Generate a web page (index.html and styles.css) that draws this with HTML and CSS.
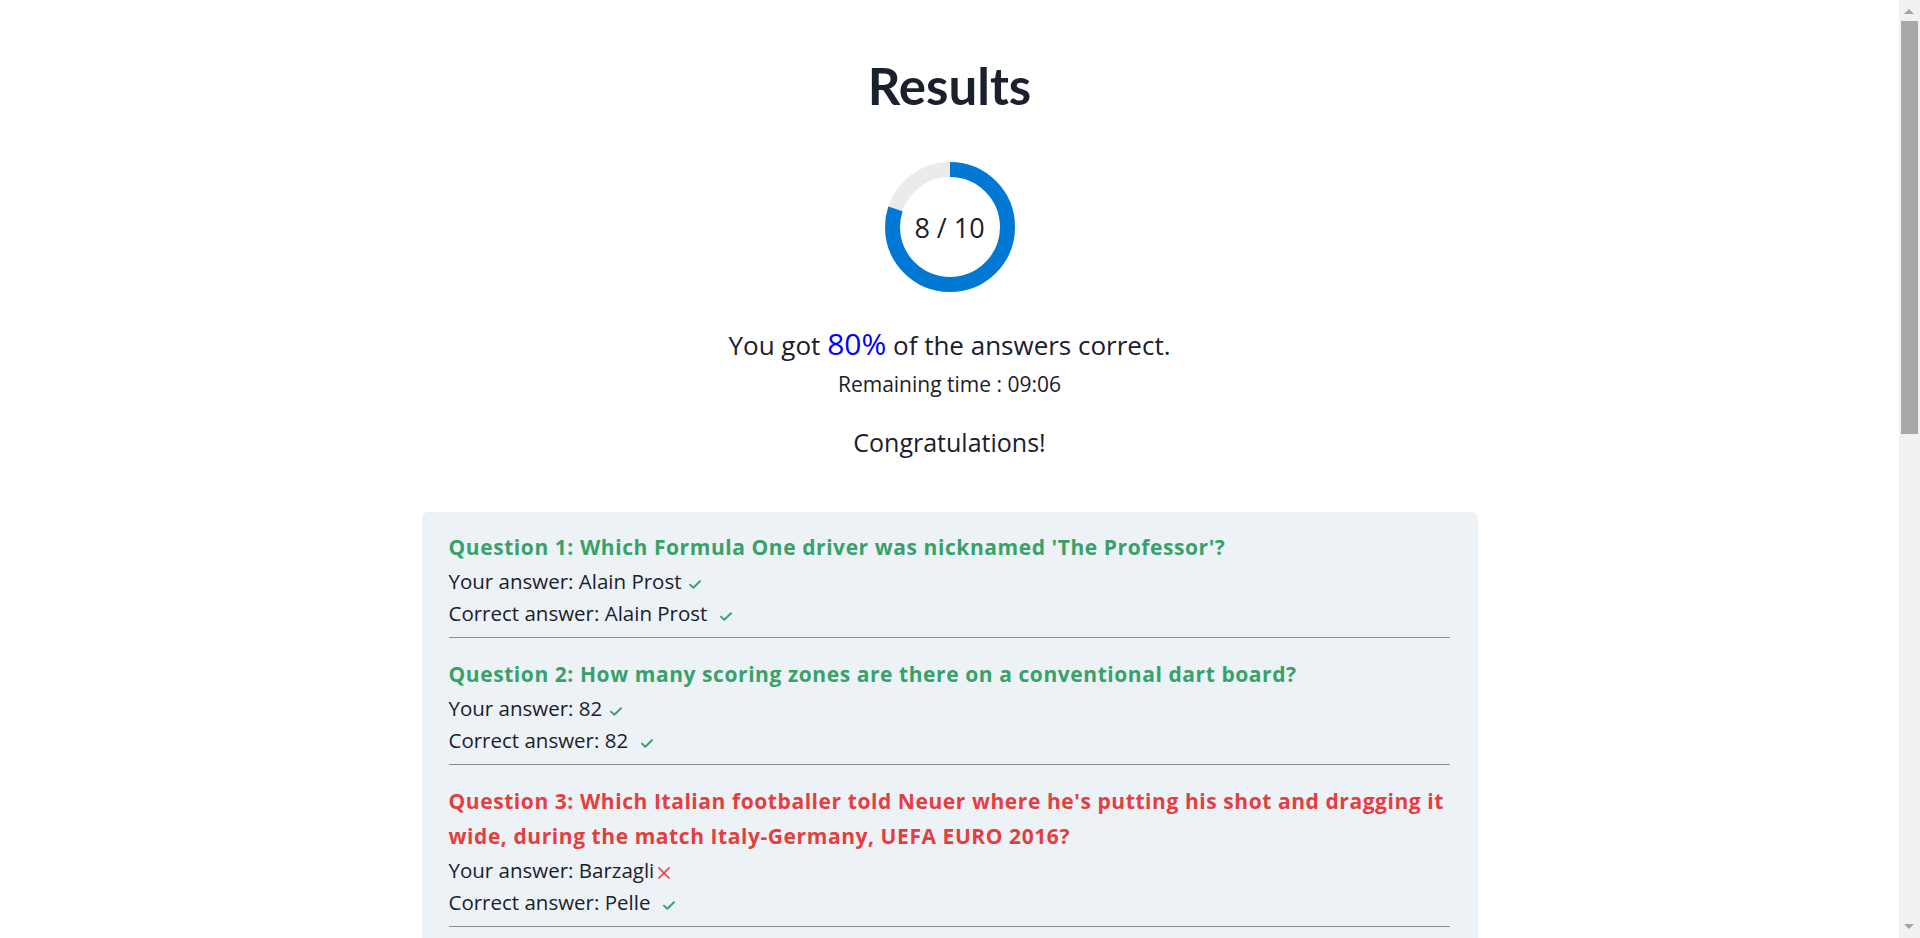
FILE: index.html
```html
<!DOCTYPE html>
<html lang="en">
<head>
<meta charset="utf-8">
<title>Results</title>
<link rel="stylesheet" href="styles.css">
</head>
<body>
<main class="page">
  <h1 class="title">Results</h1>
  <div class="progress">
    <svg class="progress-svg" width="130" height="130" viewBox="0 0 130 130">
      <circle class="track" cx="65" cy="65" r="57.5"></circle>
      <circle class="bar" cx="65" cy="65" r="57.5" transform="rotate(-90 65 65)"></circle>
    </svg>
    <div class="progress-label">8 / 10</div>
  </div>
  <p class="score">You got <span class="pct">80%</span> of the answers correct.</p>
  <p class="time">Remaining time : 09:06</p>
  <p class="congrats">Congratulations!</p>

  <section class="card">
    <div class="item">
      <div class="q ok">Question 1: Which Formula One driver was nicknamed 'The Professor'?</div>
      <div class="ans">Your answer: Alain Prost <svg class="ico" width="12" height="9" viewBox="0 0 12 9"><path class="tick" d="M1 4.6 L4.3 7.8 L11 1.2"/></svg></div>
      <div class="ans">Correct answer: Alain Prost &nbsp;<svg class="ico" width="12" height="9" viewBox="0 0 12 9"><path class="tick" d="M1 4.6 L4.3 7.8 L11 1.2"/></svg></div>
    </div>
    <div class="item">
      <div class="q ok">Question 2: How many scoring zones are there on a conventional dart board?</div>
      <div class="ans">Your answer: 82 <svg class="ico" width="12" height="9" viewBox="0 0 12 9"><path class="tick" d="M1 4.6 L4.3 7.8 L11 1.2"/></svg></div>
      <div class="ans">Correct answer: 82 &nbsp;<svg class="ico" width="12" height="9" viewBox="0 0 12 9"><path class="tick" d="M1 4.6 L4.3 7.8 L11 1.2"/></svg></div>
    </div>
    <div class="item">
      <div class="q bad">Question 3: Which Italian footballer told Neuer where he's putting his shot and dragging it wide, during the match Italy-Germany, UEFA EURO 2016?</div>
      <div class="ans">Your answer: Barzagli<svg class="ico ico-x" width="14" height="14" viewBox="0 0 14 14"><path class="cross" d="M2 2 L12 12 M12 2 L2 12"/></svg></div>
      <div class="ans">Correct answer: Pelle &nbsp;<svg class="ico" width="12" height="9" viewBox="0 0 12 9"><path class="tick" d="M1 4.6 L4.3 7.8 L11 1.2"/></svg></div>
    </div>
    <div class="item">
      <div class="q ok">Question 4: In which country were the first Olympic Games of the modern era held?</div>
      <div class="ans">Your answer: Greece <svg class="ico" width="12" height="9" viewBox="0 0 12 9"><path class="tick" d="M1 4.6 L4.3 7.8 L11 1.2"/></svg></div>
      <div class="ans">Correct answer: Greece &nbsp;<svg class="ico" width="12" height="9" viewBox="0 0 12 9"><path class="tick" d="M1 4.6 L4.3 7.8 L11 1.2"/></svg></div>
    </div>
    <div class="item">
      <div class="q ok">Question 5: How many players are there in a rugby union team?</div>
      <div class="ans">Your answer: 15 <svg class="ico" width="12" height="9" viewBox="0 0 12 9"><path class="tick" d="M1 4.6 L4.3 7.8 L11 1.2"/></svg></div>
      <div class="ans">Correct answer: 15 &nbsp;<svg class="ico" width="12" height="9" viewBox="0 0 12 9"><path class="tick" d="M1 4.6 L4.3 7.8 L11 1.2"/></svg></div>
    </div>
    <div class="item">
      <div class="q bad">Question 6: Which country won the first FIFA World Cup in 1930?</div>
      <div class="ans">Your answer: Argentina<svg class="ico ico-x" width="14" height="14" viewBox="0 0 14 14"><path class="cross" d="M2 2 L12 12 M12 2 L2 12"/></svg></div>
      <div class="ans">Correct answer: Uruguay &nbsp;<svg class="ico" width="12" height="9" viewBox="0 0 12 9"><path class="tick" d="M1 4.6 L4.3 7.8 L11 1.2"/></svg></div>
    </div>
    <div class="item">
      <div class="q ok">Question 7: In tennis, what is a score of zero called?</div>
      <div class="ans">Your answer: Love <svg class="ico" width="12" height="9" viewBox="0 0 12 9"><path class="tick" d="M1 4.6 L4.3 7.8 L11 1.2"/></svg></div>
      <div class="ans">Correct answer: Love &nbsp;<svg class="ico" width="12" height="9" viewBox="0 0 12 9"><path class="tick" d="M1 4.6 L4.3 7.8 L11 1.2"/></svg></div>
    </div>
    <div class="item">
      <div class="q ok">Question 8: How long is a marathon, in kilometres (rounded)?</div>
      <div class="ans">Your answer: 42 <svg class="ico" width="12" height="9" viewBox="0 0 12 9"><path class="tick" d="M1 4.6 L4.3 7.8 L11 1.2"/></svg></div>
      <div class="ans">Correct answer: 42 &nbsp;<svg class="ico" width="12" height="9" viewBox="0 0 12 9"><path class="tick" d="M1 4.6 L4.3 7.8 L11 1.2"/></svg></div>
    </div>
    <div class="item">
      <div class="q ok">Question 9: Which sport uses the terms 'birdie', 'eagle' and 'bogey'?</div>
      <div class="ans">Your answer: Golf <svg class="ico" width="12" height="9" viewBox="0 0 12 9"><path class="tick" d="M1 4.6 L4.3 7.8 L11 1.2"/></svg></div>
      <div class="ans">Correct answer: Golf &nbsp;<svg class="ico" width="12" height="9" viewBox="0 0 12 9"><path class="tick" d="M1 4.6 L4.3 7.8 L11 1.2"/></svg></div>
    </div>
    <div class="item">
      <div class="q ok">Question 10: How many rings are there on the Olympic flag?</div>
      <div class="ans">Your answer: 5 <svg class="ico" width="12" height="9" viewBox="0 0 12 9"><path class="tick" d="M1 4.6 L4.3 7.8 L11 1.2"/></svg></div>
      <div class="ans">Correct answer: 5 &nbsp;<svg class="ico" width="12" height="9" viewBox="0 0 12 9"><path class="tick" d="M1 4.6 L4.3 7.8 L11 1.2"/></svg></div>
    </div>
  </section>
</main>
<div class="scrollbar" aria-hidden="true">
  <div class="sb-arrow sb-up"></div>
  <div class="sb-thumb"></div>
  <div class="sb-arrow sb-down"></div>
</div>
</body>
</html>
```
FILE: styles.css
```css
html, body {
  margin: 0;
  padding: 0;
  background: #ffffff;
}
body {
  font-family: "Open Sans", "Liberation Sans", sans-serif;
  color: #1a202c;
  padding-right: 21px;
}
.page {
  display: flex;
  flex-direction: column;
  align-items: center;
  padding: 56px 0 60px;
}
.title {
  margin: 0;
  font-family: Lato, "Open Sans", sans-serif;
  font-size: 51px;
  line-height: 60px;
  font-weight: 700;
  color: #1a202c;
}
.progress {
  position: relative;
  width: 130px;
  height: 130px;
  margin-top: 46px;
}
.progress-svg {
  display: block;
}
.track {
  fill: none;
  stroke: #edebe9;
  stroke-width: 15;
}
.bar {
  fill: none;
  stroke: #0078d4;
  stroke-width: 15;
  stroke-dasharray: 289.03 361.28;
}
.progress-label {
  position: absolute;
  inset: 0;
  display: flex;
  align-items: center;
  justify-content: center;
  font-size: 27px;
  color: #1a202c;
}
.score {
  margin: 35px 0 0;
  font-size: 26px;
  line-height: 36px;
}
.pct {
  color: #0000ff;
  font-size: 30px;
  line-height: 1;
}
.time {
  margin: 7px 0 0;
  font-size: 21px;
  line-height: 28px;
}
.congrats {
  margin: 26px 0 0;
  font-size: 25px;
  line-height: 36px;
}
.card {
  margin-top: 52px;
  width: 1056px;
  box-sizing: border-box;
  padding: 0 28px 0 27px;
  background: #edf2f7;
  border-radius: 6px;
}
.item {
  padding: 19px 0 8px;
  border-bottom: 1px solid #8a8f96;
}
.item:first-child {
  padding-top: 18px;
}
.q {
  font-size: 21px;
  letter-spacing: 0.57px;
  line-height: 35px;
  font-weight: 700;
}
.q.ok {
  color: #38a169;
}
.q.bad {
  color: #e53e3e;
}
.ans {
  font-size: 20.5px;
  line-height: 32px;
}
.ico {
  display: inline-block;
  vertical-align: baseline;
  margin-left: 2px;
}
.ico-x {
  vertical-align: -2px;
  margin-left: 3px;
}
.tick {
  fill: none;
  stroke: #38a169;
  stroke-width: 1.9;
  stroke-linecap: round;
  stroke-linejoin: round;
}
.cross {
  fill: none;
  stroke: #e53e3e;
  stroke-width: 1.7;
  stroke-linecap: round;
}
.scrollbar {
  position: fixed;
  top: 0;
  right: 0;
  bottom: 0;
  width: 21px;
  background: #f1f1f1;
}
.sb-thumb {
  position: absolute;
  top: 21px;
  left: 2px;
  right: 2px;
  height: 413px;
  background: #a8a8a8;
}
.sb-arrow {
  position: absolute;
  left: 5px;
  width: 0;
  height: 0;
  border-left: 5px solid transparent;
  border-right: 5px solid transparent;
}
.sb-up {
  top: 9px;
  border-bottom: 5px solid #a3a3a3;
}
.sb-down {
  bottom: 9px;
  border-top: 5px solid #a3a3a3;
}
```
